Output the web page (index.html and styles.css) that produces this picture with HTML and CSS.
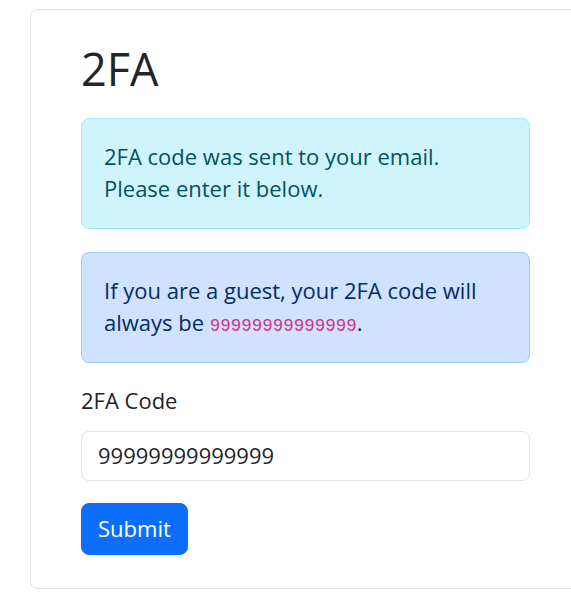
FILE: index.html
```html
<!DOCTYPE html>
<html lang="en">
<head>
<meta charset="utf-8">
<title>2FA</title>
<link rel="stylesheet" href="styles.css">
</head>
<body>
<div class="card">
  <h1 class="title">2FA</h1>
  <div class="alert alert-info">2FA code was sent to your email.<br>Please enter it below.</div>
  <div class="alert alert-primary">If you are a guest, your 2FA code will always be <code class="code">99999999999999</code>.</div>
  <form class="form">
    <label class="label" for="code">2FA Code</label>
    <input class="input" id="code" type="text" value="99999999999999">
    <button class="btn" type="button">Submit</button>
  </form>
</div>
</body>
</html>
```

FILE: styles.css
```css
html, body {
  margin: 0;
  padding: 0;
  background: #fff;
  overflow: hidden;
}
body {
  font-family: "Open Sans", "Noto Sans", sans-serif;
  font-size: 22px;
  line-height: 32px;
  color: #212529;
  padding: 9px 0 0 30px;
}
.card {
  box-sizing: border-box;
  width: 551px;
  border: 1px solid #dee2e6;
  border-radius: 8px;
  padding: 31.5px 50px 33px 50px;
}
.title {
  margin: 0 0 22.5px 0;
  font-size: 45px;
  line-height: 54px;
  font-weight: 400;
}
.alert {
  border: 1px solid transparent;
  border-radius: 8px;
  padding: 21px 22px 24px 22px;
}
.alert-info {
  background: #cff4fc;
  border-color: #9eeaf9;
  color: #055160;
  margin-bottom: 23px;
}
.alert-primary {
  background: #cfe2ff;
  border-color: #9ec5fe;
  color: #052c65;
  margin-bottom: 20.5px;
}
.code {
  font-family: "Liberation Mono", monospace;
  font-size: 17.5px;
  line-height: 1;
  color: #d63384;
}
.form {
  display: flex;
  flex-direction: column;
  align-items: flex-start;
}
.label {
  margin-bottom: 15px;
}
.input {
  box-sizing: border-box;
  width: 100%;
  height: 50px;
  font-family: inherit;
  font-size: 22px;
  line-height: 32px;
  color: #212529;
  padding: 7px 16px 9px 16px;
  border: 1px solid #dee2e6;
  border-radius: 8px;
  margin: 0 0 22.5px 0;
  outline: none;
}
.btn {
  font-family: inherit;
  font-size: 22px;
  line-height: 32px;
  color: #fff;
  background: #0d6efd;
  border: 1px solid #0d6efd;
  border-radius: 8px;
  padding: 8px 16px 10px 16px;
  cursor: pointer;
}
```
